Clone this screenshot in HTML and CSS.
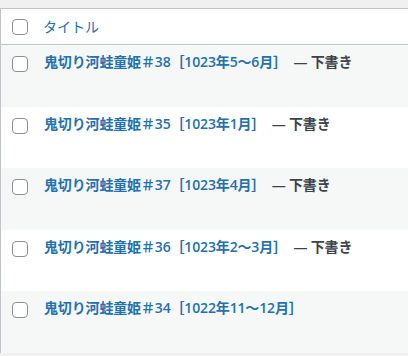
FILE: index.html
```html
<!DOCTYPE html>
<html lang="ja">
<head>
<meta charset="utf-8">
<link rel="stylesheet" href="styles.css">
</head>
<body>
<div class="table">
  <div class="head">
    <div class="check"><span class="box"></span></div>
    <div class="title-col">タイトル</div>
  </div>
  <div class="row alt">
    <div class="check"><span class="box"></span></div>
    <div class="title"><a class="link">鬼切り河蛙童姫＃38［1023年5～6月］</a> <span class="state">— 下書き</span></div>
  </div>
  <div class="row">
    <div class="check"><span class="box"></span></div>
    <div class="title"><a class="link">鬼切り河蛙童姫＃35［1023年1月］</a> <span class="state">— 下書き</span></div>
  </div>
  <div class="row alt">
    <div class="check"><span class="box"></span></div>
    <div class="title"><a class="link">鬼切り河蛙童姫＃37［1023年4月］</a> <span class="state">— 下書き</span></div>
  </div>
  <div class="row">
    <div class="check"><span class="box"></span></div>
    <div class="title"><a class="link">鬼切り河蛙童姫＃36［1023年2～3月］</a> <span class="state">— 下書き</span></div>
  </div>
  <div class="row alt">
    <div class="check"><span class="box"></span></div>
    <div class="title"><a class="link">鬼切り河蛙童姫＃34［1022年11～12月］</a></div>
  </div>
</div>
</body>
</html>
```
FILE: styles.css
```css
html, body {
  margin: 0;
  padding: 0;
  background: #f0f0f1;
  font-family: "Open Sans", "Noto Sans CJK JP", sans-serif;
  font-size: 14px;
}
.table {
  margin-top: 8px;
  border-top: 1px solid #c3c4c7;
  border-left: 1px solid #c3c4c7;
  background: #fff;
}
.head {
  display: flex;
  height: 35px;
  border-bottom: 1px solid #c3c4c7;
}
.row {
  display: flex;
  height: 61.5px;
  background: #fff;
}
.row.alt {
  background: #f6f7f7;
}
.check {
  width: 31px;
  padding: 10px 0 0 11px;
}
.row .check {
  padding-top: 11px;
}
.box {
  display: block;
  width: 14px;
  height: 14px;
  border: 1px solid #8c8f94;
  border-radius: 4px;
  background: #fff;
}
.title-col {
  color: #2271b1;
  line-height: 20px;
  padding-top: 8px;
}
.title {
  line-height: 20px;
  padding-top: 7px;
  padding-left: 1px;
  font-weight: 600;
  white-space: nowrap;
  letter-spacing: -0.15px;
}
.link {
  color: #2271b1;
}
.state {
  color: #3c434a;
  padding-left: 3px;
}
```
